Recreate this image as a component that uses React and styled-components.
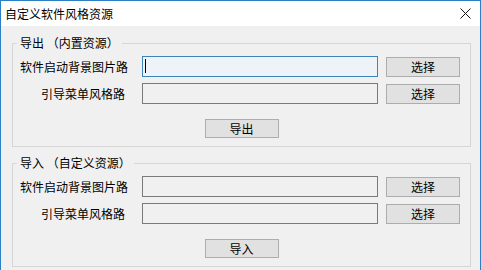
import React from "react";
import styled, { createGlobalStyle } from "styled-components";

const Global = createGlobalStyle`
  html, body { margin: 0; padding: 0; background: #f0f0f0; }
  body { font-family: "Noto Sans CJK SC", "Noto Sans", sans-serif; }
  * { box-sizing: border-box; }
`;

const Window = styled.div`
  width: 481px;
  height: 270px;
  border: 1px solid #2b7fc4;
  border-bottom: none;
  background: #f0f0f0;
  display: flex;
  flex-direction: column;
  overflow: hidden;
`;

const TitleBar = styled.div`
  height: 25px;
  background: #ffffff;
  display: flex;
  align-items: center;
  justify-content: space-between;
  padding: 0 9px 0 4px;
  flex-shrink: 0;
`;

const TitleText = styled.span`
  font-size: 12px;
  line-height: 14px;
  color: #000;
`;

const CloseIcon = styled.svg`
  width: 11px;
  height: 11px;
  display: block;
`;

const Content = styled.div`
  flex: 1;
  padding: 10px 9px 0 11px;
  display: flex;
  flex-direction: column;
  gap: 9px;
`;

const Group = styled.fieldset`
  margin: 0;
  padding: 0 0 8px 0;
  min-inline-size: 0;
  border: 1px solid #d6d6d6;
  display: flex;
  flex-direction: column;
`;

const Legend = styled.legend`
  margin-left: 4px;
  padding: 0 3px;
  font-size: 12px;
  line-height: 14px;
  color: #000;
`;

const Rows = styled.div`
  display: flex;
  flex-direction: column;
  gap: 6px;
  margin-top: 6px;
`;

const Row = styled.div`
  display: flex;
  align-items: center;
  height: 21px;
`;

const Label = styled.span`
  width: 115px;
  text-align: right;
  padding-right: ${(p) => p.$shift || 0}px;
  font-size: 12px;
  line-height: 14px;
  color: #000;
  white-space: nowrap;
`;

const TextBox = styled.div`
  margin-left: 14px;
  width: 236px;
  height: 21px;
  border: 1px solid ${(p) => (p.$focused ? "#3d84b8" : "#7a7a7a")};
  background: ${(p) => (p.$focused ? "#edf3f9" : "#f0f0f0")};
  position: relative;
`;

const Caret = styled.span`
  position: absolute;
  left: 2px;
  top: 2px;
  width: 1px;
  height: 14px;
  background: #000;
`;

const Button = styled.button`
  margin: 0 0 0 ${(p) => (p.$center ? "auto" : "8px")};
  ${(p) => (p.$center ? "margin-right: auto;" : "")}
  width: 74px;
  height: ${(p) => (p.$center ? 19 : 20)}px;
  border: 1px solid #adadad;
  background: #e1e1e1;
  font-family: "Noto Sans CJK SC", "Noto Sans", sans-serif;
  font-size: 12px;
  line-height: 14px;
  color: #000;
  padding: 0;
  display: flex;
  align-items: center;
  justify-content: center;
`;

const ButtonRow = styled.div`
  display: flex;
  margin-top: 15px;
`;

function FileRow({ label, shift, focused }) {
  return (
    <Row>
      <Label $shift={shift}>{label}</Label>
      <TextBox $focused={focused}>{focused && <Caret />}</TextBox>
      <Button>选择</Button>
    </Row>
  );
}

function Section({ title, action, focusFirst }) {
  return (
    <Group>
      <Legend>{title}</Legend>
      <Rows>
        <FileRow label="软件启动背景图片路" focused={focusFirst} />
        <FileRow label="引导菜单风格路" shift={3} />
      </Rows>
      <ButtonRow>
        <Button $center>{action}</Button>
      </ButtonRow>
    </Group>
  );
}

export default function App() {
  return (
    <>
      <Global />
      <Window>
        <TitleBar>
          <TitleText>自定义软件风格资源</TitleText>
          <CloseIcon viewBox="0 0 11 11">
            <path d="M0.5 0.5 L10.5 10.5 M10.5 0.5 L0.5 10.5" stroke="#111" strokeWidth="1" fill="none" />
          </CloseIcon>
        </TitleBar>
        <Content>
          <Section title="导出 （内置资源）" action="导出" focusFirst />
          <Section title="导入 （自定义资源）" action="导入" />
        </Content>
      </Window>
    </>
  );
}
